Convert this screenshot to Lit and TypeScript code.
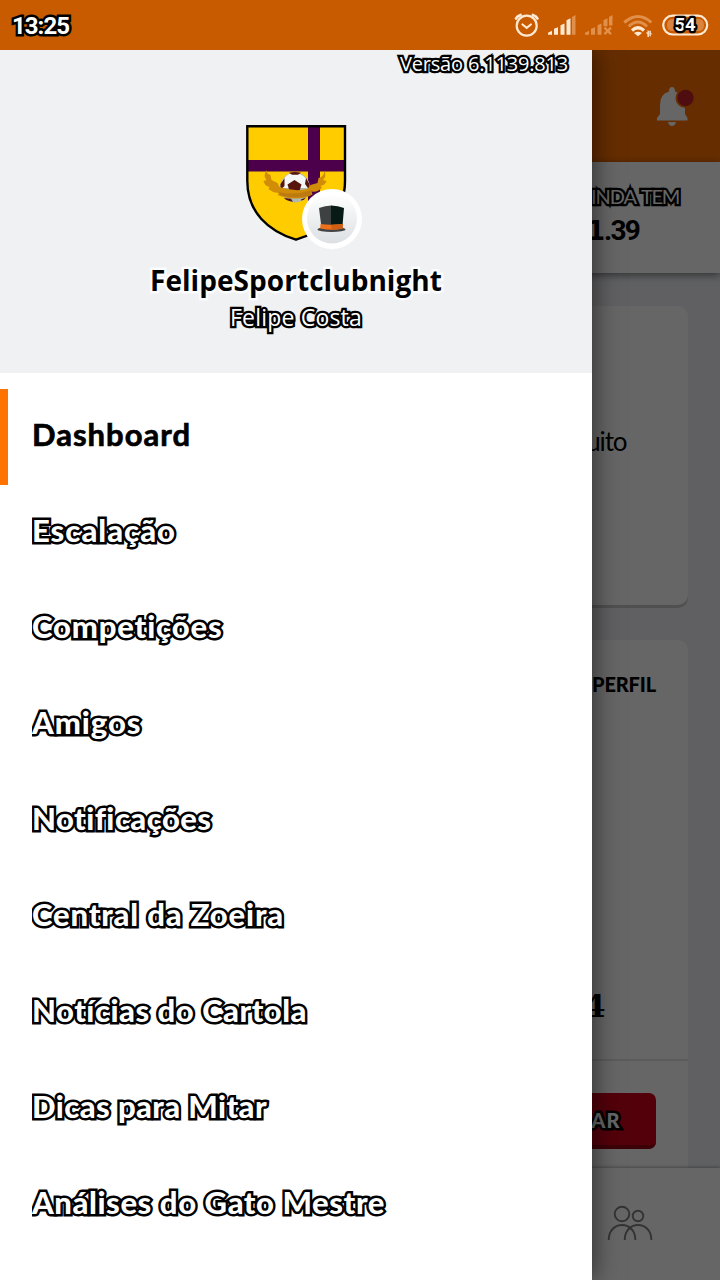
import { LitElement, html, css } from "lit";
import { customElement, property, state } from "lit/decorators.js";

/** One line of text whose tracking is computed so that it fills a given width. */
@customElement("fit-text")
class FitText extends LitElement {
  @property({ type: Number }) width = 0;
  @property() text = "";
  @state() private tracking = 0;

  static styles = css`
    :host { display: block; white-space: pre; }
    .line { display: inline-block; font-kerning: normal; font-variant-ligatures: none; }
  `;

  firstUpdated() {
    const line = this.renderRoot.querySelector(".line") as HTMLElement;
    const natural = line.getBoundingClientRect().width;
    this.tracking = (this.width - natural) / this.text.length;
  }

  render() {
    return html`<span class="line" style="letter-spacing:${this.tracking}px">${this.text}</span>`;
  }
}

const MENU: [string, number][] = [
  ["Dashboard", 159],
  ["Escalação", 144],
  ["Competições", 190.5],
  ["Amigos", 109.5],
  ["Notificações", 179.5],
  ["Central da Zoeira", 252],
  ["Notícias do Cartola", 275],
  ["Dicas para Mitar", 235],
  ["Análises do Gato Mestre", 353],
];

@customElement("app-root")
class AppRoot extends LitElement {
  static styles = css`
    :host {
      display: flex; flex-direction: column; width: 720px; height: 1280px;
      overflow: hidden; font-family: Lato, "Open Sans", sans-serif; color: #000;
    }
    * { box-sizing: border-box; }
    svg { display: block; flex: none; }
    .outlined { color: #fff; -webkit-text-stroke: 5px #000; paint-order: stroke fill; stroke-linejoin: round; }

    .status {
      height: 50px; flex: none; background: #c85b00; display: flex; align-items: center;
      justify-content: space-between; padding: 0 11px 0 12px; font-family: Roboto, sans-serif;
    }
    .clock { font-size: 24px; font-weight: 700; line-height: 50px; padding-top: 2px; }
    .stage { position: relative; flex: 1; display: flex; min-height: 0; overflow: hidden; }

    .page { flex: 1; display: flex; flex-direction: column; background: #eff1f5; min-width: 0; }
    .appbar { height: 112px; flex: none; background: #ff7200; display: flex; justify-content: flex-end; padding: 34px 24px 0 0; }
    .summary {
      height: 111px; flex: none; background: #fff; box-shadow: 0 2px 8px rgba(0,0,0,.5);
      display: flex; flex-direction: column; align-items: flex-start; padding: 22px 0 0 591px;
    }
    .remain { font-size: 20px; line-height: 24px; display: flex; gap: 5px; }
    .money { font: 700 28px/34px Roboto, sans-serif; margin: 6px 0 0 -4px; display: flex; align-items: baseline; }
    .money .lead { font-family: "DejaVu Sans"; font-size: 26px; margin-right: -1px; }
    .cards { flex: 1; display: flex; flex-direction: column; gap: 32px; padding: 33px 32px 0; min-height: 0; }
    .card { background: #fff; border-radius: 10px; box-shadow: 0 3px 0 #c8c8c8; }
    .intro { height: 299px; flex: none; padding: 120px 0 0 546px; font-size: 26px; line-height: 30px; }
    .profile { flex: 1; border-radius: 10px 10px 0 0; margin-top: 3px; box-shadow: none; display: flex; flex-direction: column; }
    .heading { font-size: 20px; line-height: 24px; font-weight: 900; padding: 32px 0 0 560px; height: 344px; }
    .points { font: 700 31px/36px "DejaVu Serif", serif; padding: 4px 0 0 552px; height: 77px; border-bottom: 2px solid #e4e4e4; }
    .action {
      margin: 32px 32px 0 400px; height: 56px; background: #d0001b; border-bottom: 4px solid #960013;
      border-radius: 7px; padding: 15px 0 0 147px; font-size: 20px; line-height: 24px; font-weight: 900;
    }
    .tabs { height: 112px; flex: none; background: #fff; box-shadow: 0 -1px 3px rgba(0,0,0,.3); display: flex; justify-content: flex-end; padding: 37px 67px 0 0; }
    .scrim { position: absolute; inset: 0; background: rgba(0,0,0,.6); }

    .drawer {
      position: absolute; left: 0; top: 0; bottom: 0; width: 592px; background: #fff;
      display: flex; flex-direction: column; box-shadow: 2px 0 24px rgba(0,0,0,.55);
    }
    .account {
      height: 323px; flex: none; background: #f0f1f3; display: flex; flex-direction: column;
      align-items: center; font-family: "Open Sans", sans-serif;
    }
    .version { align-self: flex-end; font-size: 20px; line-height: 28px; margin-right: 24px; }
    .thin { -webkit-text-stroke-width: 4.6px; }
    .crest { margin: 45px 0 0; padding-left: 16px; }
    .team { font-size: 28px; font-weight: 700; line-height: 38px; margin-top: 12px; -webkit-text-stroke: 5px #fbfcfd; paint-order: stroke fill; stroke-linejoin: round; }
    .owner { font-size: 23px; line-height: 32px; margin-top: 2px; }
    .menu { padding-top: 16px; display: flex; flex-direction: column; }
    .item { height: 96px; padding: 25px 0 0 24px; border-left: 8px solid transparent; font-size: 31px; line-height: 40px; font-weight: 900; }
    .item fit-text { clip-path: inset(-10px -10px -10px 0); }
    .active { border-left-color: #ff7400; font-weight: 700; }
    .active fit-text { -webkit-text-stroke: .7px #000; }
  `;

  private statusIcons() {
    return html`<svg width="196" height="50" viewBox="513 0 196 50">
      <g fill="none" stroke="#ffe9d2" stroke-width="2.2" stroke-linecap="round">
        <circle cx="526.7" cy="25.7" r="10"/><path d="M522.5 24.5l4.2 3.3 4.2-3.3"/>
        <path d="M516 18.5q1-2.4 4.5-3.5M537.4 18.5q-1-2.4-4.5-3.5" stroke-width="2.8"/>
      </g>
      <g fill="#ffe9d2"><path d="M548 34.7v-2l4-2v4zM554 28.7l4-1.5v7.5h-4zM560.5 25.2l4-1.8v11.3h-4zM566.5 20.2l4-2v16.5h-4z"/></g>
      <g fill="#e0904a"><path d="M572 17l3.5-2v19.7H572zM585 34.7v-2l4-2v4zM591 28.7l4-1.5v7.5h-4zM597.5 25.2l4-1.8v11.3h-4zM603.5 20.2l4-2v8h-4zM609 17l3.500-2v10.500H609z"/></g>
      <path d="M604.500 27.700l6.500 6.500M611 27.700l-6.500 6.500" stroke="#e0904a" stroke-width="2.400"/>
      <g fill="none" stroke-width="3"><path d="M624.300 22.500Q638 10.500 651.300 22.500M628.700 26.500Q638 17.500 647 26.500" stroke="#e0904a"/>
      <path d="M632 30.500Q638 25 644 30.500" stroke="#ffe9d2" stroke-width="3.200"/></g>
      <path d="M634 33q4-2.600 8 0l-4 3.300z" fill="#ffe9d2"/>
      <path d="M645.800 32.500h1.800V30l1.300 1v6h-1.400v-2.800zM652.500 34.200h-1.800v2.500l-1.300-1v-5h1.400v2.300z" fill="#ffe9d2"/>
      <rect x="663.200" y="15.700" width="44" height="18.800" rx="9.400" fill="none" stroke="#ffe9d2" stroke-width="2.200"/>
      <path d="M667 25q0-6 6-6h25q6 0 6 6t-6 6h-25q-6 0-6-6z" fill="#dc8340"/>
      <text x="674.500" y="31" textLength="21" font-family="Roboto" font-size="18.500" font-weight="700" fill="#fff" stroke="#000" stroke-width="4.500" stroke-linejoin="round" paint-order="stroke">54</text>
    </svg>`;
  }

  private crest() {
    return html`<svg width="120" height="126" viewBox="244 123 120 126">
      <defs>
        <linearGradient id="disc" x2="0" y2="1"><stop stop-color="#fff"/><stop offset="1" stop-color="#dce0e2"/></linearGradient>
      </defs>
      <path d="M247.300 126.300H345V181C345 212 324 231 296 239.700 268 231 247.300 212 247.300 181z" fill="#fc0"/>
      <g fill="#4c004b"><path d="M308 126h12v75h-12z"/><path d="M248 160h97v11.500h-97z"/></g>
      <path d="M247.300 126.300H345V181C345 212 324 231 296 239.700 268 231 247.300 212 247.300 181z" fill="none" stroke="#000" stroke-width="2.400"/>
      <circle cx="295" cy="187.500" r="15" fill="#adb8b0"/>
      <path d="M281 188q0-10 8-14h11q9 4 10 14z" fill="#f4f6f5"/>
      <path d="M289 172.800q6-1.500 12 0l-3 2h-6zM294.500 180l7 4.500-2.500 8h-9l-2.500-8zM280.500 184l4-6v8l-4 4zM309.500 184l-3.500-6-1 6 5 7z" fill="#58150e"/>
      <path d="M266 171q-3 5 .5 9l-3 1q1 5 6 6l-1 2q5 4.500 11 3.500l-2 2.500q8 3.500 18 3.500t17-4l-1-3q7 1 10.500-4l-1.500-1.500q5-1 6-5l-3.500-1q4-4 1.500-9-1 6-6 7l-1 5-7 2-3 4q-13 3-28-2l-2-4-6-3-1-5q-4-1-4-5z" fill="#d28d08"/>
      <path d="M278 192q17 4 34-2l-1 5q-14 5-31 0z" fill="#bd7a10"/>
      <path d="M284 198l7 .8 2 3q-6-.5-9-3.800zM301 199.500l5-2q-2 3-5 3z" fill="#58150e"/>
      <circle cx="332" cy="219" r="30" fill="#fff"/><circle cx="332" cy="218.500" r="25" fill="url(#disc)"/>
      <ellipse cx="331.500" cy="229.500" rx="14" ry="2.400" fill="#414344"/>
      <path d="M319 208q6-2.500 12.500-2.500V228h-10z" fill="#3e4141"/>
      <path d="M331 205.500q7 0 13 2.500l-1.700 20H331z" fill="#071a15"/>
      <path d="M320.500 224q11 1.500 22 0l.3 4.500q-11 2.500-22.600 0z" fill="#ed711b"/>
      <path d="M331.500 224.800l11-.8.3 4.500q-5 1.300-11.300 1.100z" fill="#cf5f14"/>
    </svg>`;
  }

  private bell() {
    return html`<svg width="42" height="44" viewBox="654 84 42 44">
      <path d="M672 87q3 0 3 4.500 10 2 10 14v8.500l2.500 4v2.500H657V118l3-4v-8.500q0-12 9-14 0-4.500 3-4.500zM668 122h8q-1 4-4 4t-4-4z" fill="#fff"/>
      <circle cx="685.500" cy="98" r="10" fill="#ff7200"/><circle cx="685.500" cy="98" r="8.200" fill="#c52226"/>
    </svg>`;
  }

  render() {
    return html`
      <div class="status">
        <fit-text class="clock outlined" text="13:25" .width=${57}></fit-text>
        ${this.statusIcons()}
      </div>
      <div class="stage">
        <div class="page">
          <div class="appbar">${this.bell()}</div>
          <div class="summary">
            <div class="remain outlined thin">
              <fit-text text="INDA" .width=${45}></fit-text>
              <fit-text text="TEM" .width=${38}></fit-text>
            </div>
            <div class="money"><span class="lead">1</span><fit-text text=".39" .width=${35}></fit-text></div>
          </div>
          <div class="cards">
            <div class="card intro"><fit-text text="tuito" .width=${48.5}></fit-text></div>
            <div class="card profile">
              <fit-text class="heading" text="PERFIL" .width=${64}></fit-text>
              <div class="points">4</div>
              <div class="action"><fit-text class="outlined" text="SAR" .width=${42}></fit-text></div>
            </div>
          </div>
          <div class="tabs">
            <svg width="46" height="36" viewBox="607 1205 46 36" fill="none" stroke="#808080" stroke-width="1.900">
              <circle cx="622" cy="1214" r="7.300"/><circle cx="638" cy="1216" r="5.300"/>
              <path d="M608.700 1240c0-20 26.700-20 26.700 0M624.700 1240c0-20 26.700-20 26.700 0"/>
            </svg>
          </div>
        </div>
        <div class="scrim"></div>
        <div class="drawer">
          <div class="account">
            <fit-text class="version outlined thin" text="Versão 6.1139.813" .width=${168}></fit-text>
            <div class="crest">${this.crest()}</div>
            <fit-text class="team" text="FelipeSportclubnight" .width=${292}></fit-text>
            <fit-text class="owner outlined thin" text="Felipe Costa" .width=${132}></fit-text>
          </div>
          <div class="menu">
            ${MENU.map(([label, width], i) => html`
              <div class="item ${i === 0 ? "active" : ""}">
                <fit-text class=${i === 0 ? "" : "outlined"} .text=${label} .width=${width}></fit-text>
              </div>`)}
          </div>
        </div>
      </div>`;
  }
}
